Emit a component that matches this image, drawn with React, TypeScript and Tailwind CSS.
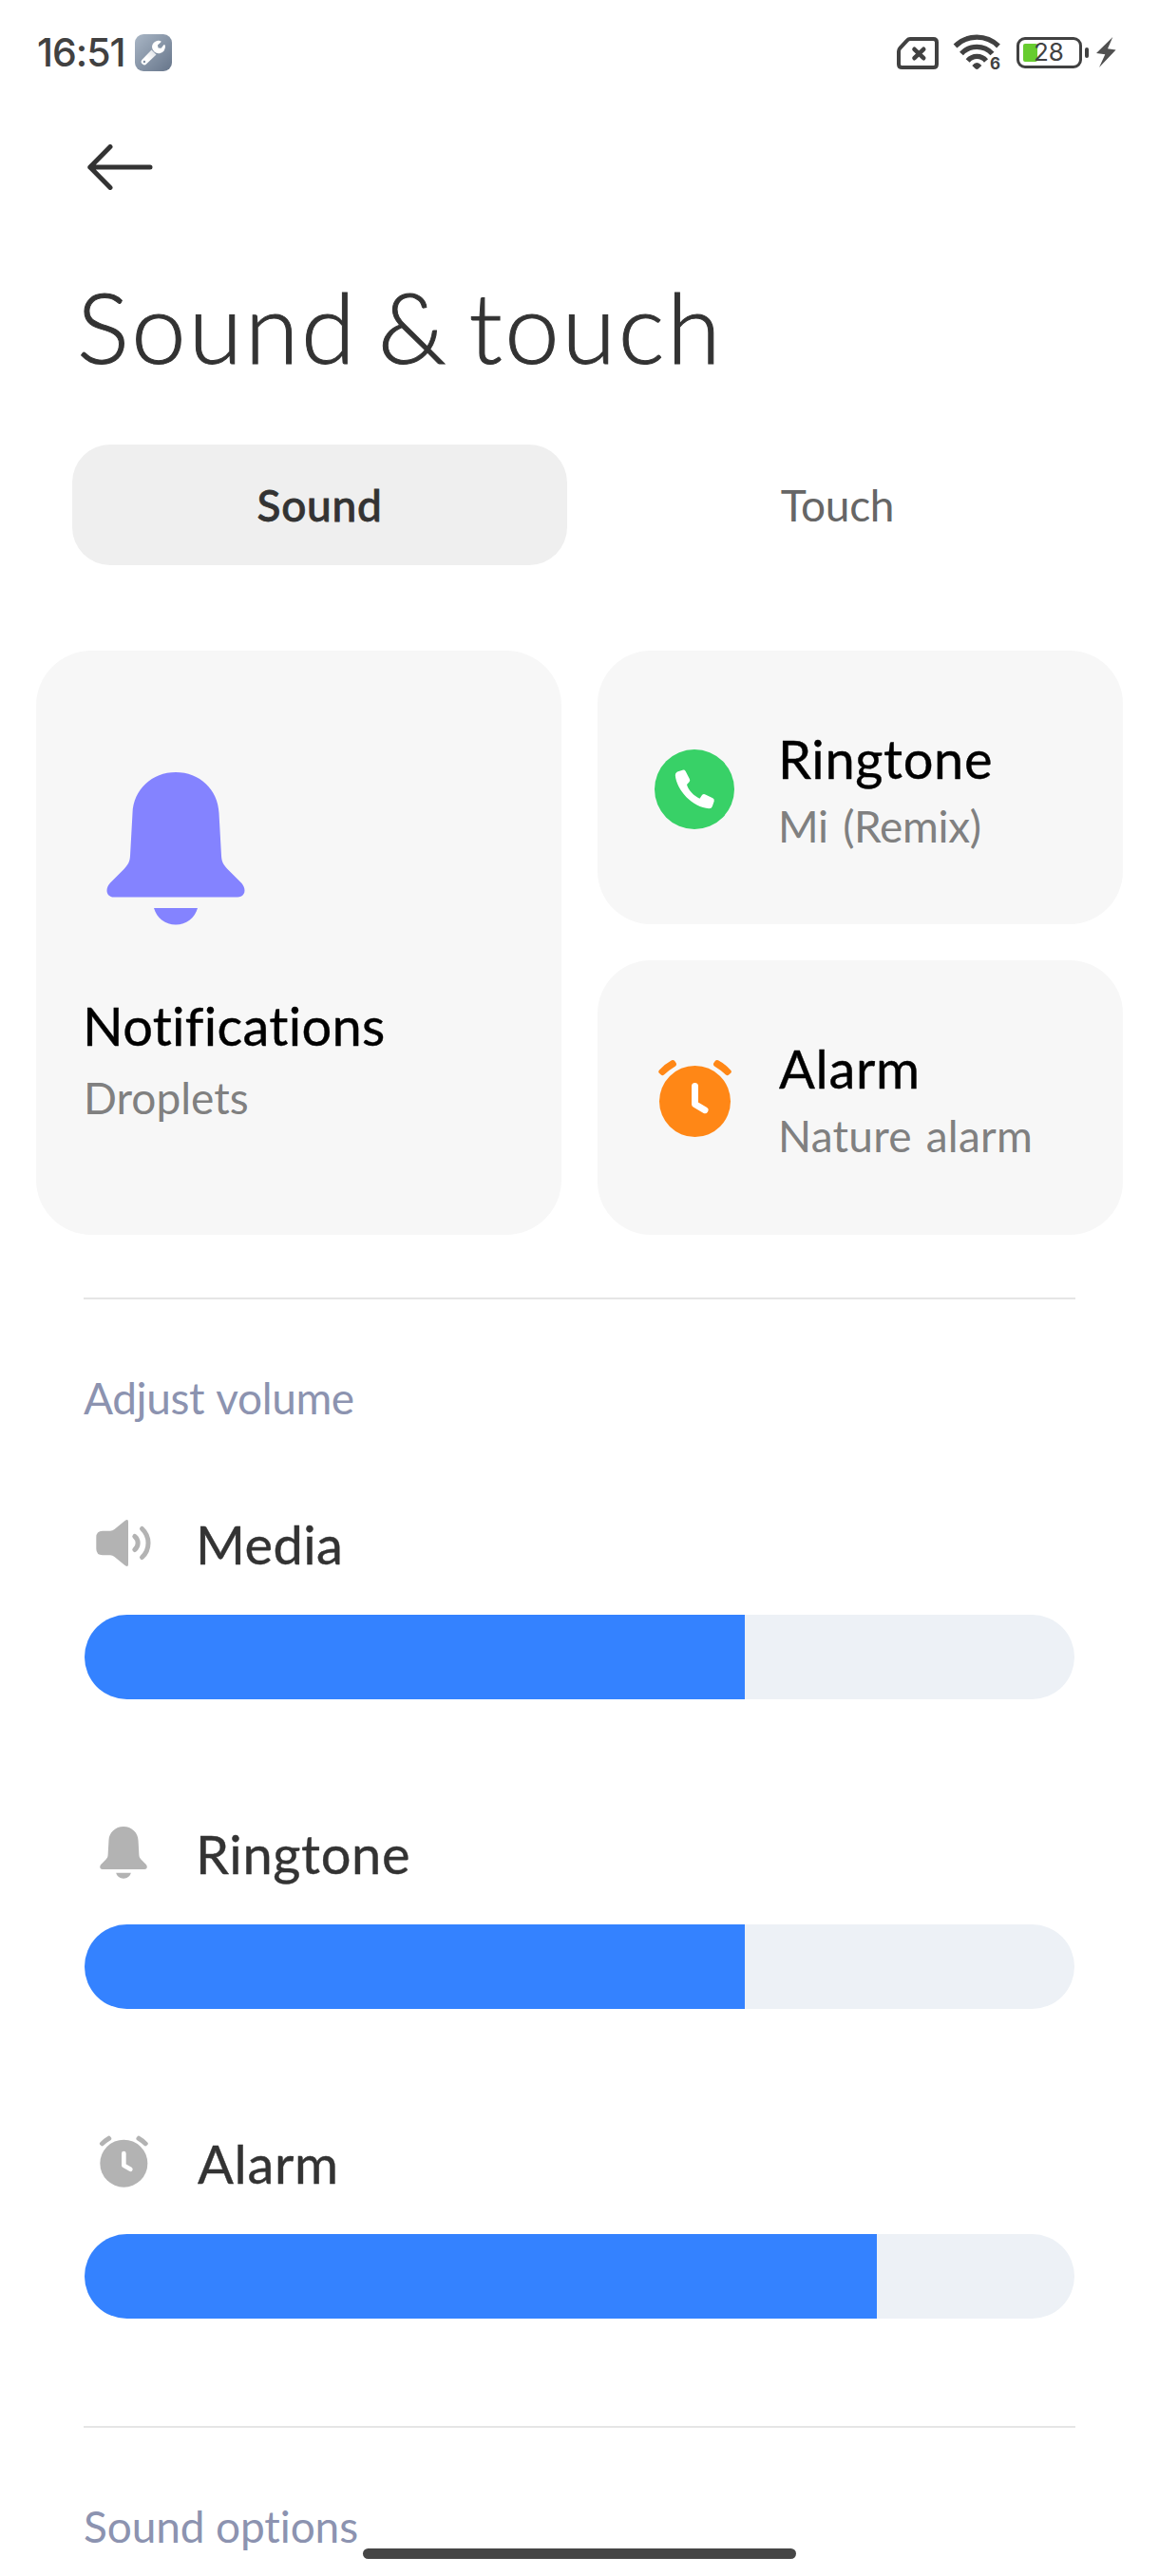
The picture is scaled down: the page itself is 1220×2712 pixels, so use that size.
import type { ReactNode } from 'react'

function StatusBar() {
  return (
    <div className="flex h-[110px] items-center justify-between pl-[39px] pr-[45px] text-[#414141]">
      <div className="flex items-center">
        <span className="w-[103px] font-['Inter',sans-serif] text-[41px] leading-[50px] font-medium tracking-[-1px] whitespace-nowrap">16:51</span>
        <svg width="39" height="39" viewBox="0 0 39 39">
          <defs>
            <linearGradient id="tool-bg" x1="0" y1="0" x2="1" y2="1">
              <stop offset="0" stopColor="#a9b6c5" />
              <stop offset="1" stopColor="#66758a" />
            </linearGradient>
            <linearGradient id="tool-handle" x1="1" y1="0" x2="0" y2="1">
              <stop offset="0" stopColor="#d9dde2" />
              <stop offset="0.6" stopColor="#ffffff" />
            </linearGradient>
          </defs>
          <rect width="39" height="39" rx="9" fill="url(#tool-bg)" />
          <path d="M17.5 16.5L7.6 26.8a3.1 3.1 0 0 0 4.6 4.4L22.5 21.5Z" fill="url(#tool-handle)" />
          <path d="M27.5 7.2A7 7 0 0 0 18 13.5A7 7 0 1 0 31.8 11.6L30.6 10.9L27.6 14.8L24.6 14.6L23.9 11.6L27.3 8.6Z" fill="#fff" />
          <circle cx="9.9" cy="29" r="1.2" fill="#8291a3" />
        </svg>
      </div>
      <div className="flex items-center">
        <svg className="mt-[2px]" width="44" height="34" viewBox="0 0 44 34" fill="none" stroke="currentColor" strokeLinecap="round" strokeLinejoin="round">
          <path d="M14 2H38.5Q42 2 42 5.500V28.500Q42 32 38.500 32H5.500Q2 32 2 28.500V15Q2 13 3.400 11.600L10.800 3.600Q12.200 2 14 2Z" strokeWidth="4" />
          <path d="M18.500 12.800L28.200 22.200M28.200 12.800L18.500 22.200" strokeWidth="4.600" />
        </svg>
        <div className="relative ml-[15px] h-[38px] w-[51px]">
          <svg width="51" height="38" viewBox="0 0 51 38" fill="none" stroke="currentColor" strokeWidth="5.300">
            <path d="M2.500 12.500A32.400 32.400 0 0 1 48 12.500" />
            <path d="M9 20.500A22 22 0 0 1 41.500 20.500" />
            <path d="M15.700 28A12.500 12.500 0 0 1 35 28" />
            <path d="M20.300 33Q25.300 27 30.300 33L27 36.200Q25.300 37.600 23.600 36.200Z" fill="currentColor" stroke="none" />
          </svg>
          <span className="absolute top-[22px] left-[38px] pl-px font-['Inter',sans-serif] text-[17px] leading-[18px] font-bold">6</span>
        </div>
        <div className="relative ml-[16px] flex h-[33px] w-[69px] items-center rounded-[9px] border-[3.500px] border-[#414141] pl-[4px]">
          <div className="h-[19px] w-[15px] rounded-[2px] bg-[#67cc2f]" />
          <span className="absolute left-[15px] font-['Inter',sans-serif] text-[26px] leading-[26px]">28</span>
        </div>
        <div className="ml-[3px] h-[11px] w-[4px] rounded-[2px] bg-[#414141]" />
        <svg className="ml-[8px]" width="21" height="32" viewBox="0 0 21 32" fill="#505050">
          <path d="M17.300 0L0 17L9.300 18.200L3 32L20.600 13.400L12 12.300Z" />
        </svg>
      </div>
    </div>
  )
}

function BellIcon({ className }: { className: string }) {
  return (
    <svg className={className} viewBox="0 0 146 161" fill="currentColor">
      <path d="M73 0C48 0 28.500 18 27.500 43L25 88C24.700 94 23 97 18.500 102L4 116.500C-2 123 0 131.500 8 131.500H138C146 131.500 148 123 142 116.500L127.500 102C123 97 121.300 94 121 88L118.500 43C117.500 18 98 0 73 0Z" />
      <path d="M50 143H96C93 153.500 84 160.500 73 160.500C62 160.500 53 153.500 50 143Z" />
    </svg>
  )
}

function AlarmIcon({ className }: { className: string }) {
  return (
    <svg className={className} viewBox="0 0 84 84" fill="none" strokeLinecap="round" strokeLinejoin="round">
      <circle cx="42.500" cy="44.500" r="37.500" fill="currentColor" />
      <path d="M4.800 11.800Q10.500 5.200 18 1.200Q19.800 0.400 21 1.800L22.800 4.200Q23.700 6.200 22 7.400Q15.500 11.200 10 16.600Q8.300 18 6.800 16.600L4.600 14.600Q3.500 13.200 4.800 11.800Z" fill="currentColor" />
      <path d="M80.200 11.800Q74.500 5.200 67 1.200Q65.200 0.400 64 1.800L62.200 4.200Q61.300 6.200 63 7.400Q69.500 11.200 75 16.600Q76.700 18 78.200 16.600L80.400 14.600Q81.500 13.200 80.200 11.800Z" fill="currentColor" />
      <path d="M42.500 28.500V47.500L53 53.700" stroke="#fff" strokeWidth="7" />
    </svg>
  )
}

function PhoneIcon() {
  return (
    <svg className="size-[84px]" viewBox="0 0 84 84">
      <circle cx="42" cy="42" r="42" fill="#38d167" />
      <path d="M24 23.500L29.500 21.700Q31.600 21.200 32.700 23L36.800 31Q37.800 33 36.500 34.300L34 37C35.500 43 41.500 49 47.500 51.700L50 48Q51.500 46.500 53.500 47.400L61.300 51.300Q63.200 52.400 62.700 54.500L60.800 60Q60 62.200 57.500 62.300C40 61 23 43 21.800 27Q21.800 24.500 24 23.500Z" fill="#fff" />
    </svg>
  )
}

function SpeakerIcon() {
  return (
    <svg className="size-[60px]" viewBox="0 0 60 60" fill="currentColor">
      <path d="M8 17.700H16Q18.500 17.700 20.500 16L31.500 7Q35 4.500 35 8V53Q35 56.500 31.500 54L20.500 45Q18.500 43.300 16 43.300H8Q1.300 43.300 1.300 36.500V24.500Q1.300 17.700 8 17.700Z" />
      <g fill="none" stroke="currentColor" strokeWidth="5" strokeLinecap="round">
        <path d="M41.800 23.500A9 9 0 0 1 41.800 37.500" />
        <path d="M49.500 15.500A20.500 20.500 0 0 1 49.500 45.500" />
      </g>
    </svg>
  )
}

function SoundCard({ icon, title, subtitle, className, titleClass, subClass }: { icon: ReactNode; title: string; subtitle: string; className: string; titleClass: string; subClass: string }) {
  return (
    <div className={`flex rounded-[56px] bg-[#f7f7f7] pl-[60px] ${className}`}>
      <div className="mt-[104px] mr-[46px] h-[84px] w-[84px]">{icon}</div>
      <div className="mt-[82px] whitespace-nowrap">
        <div className={`text-[56px] leading-[64px] text-black [-webkit-text-stroke:0.4px] ${titleClass}`}>{title}</div>
        <div className={`mt-[11px] text-[46px] leading-[56px] text-[#808080] ${subClass}`}>{subtitle}</div>
      </div>
    </div>
  )
}

function VolumeRow({ icon, label, labelClass, fillClass }: { icon: ReactNode; label: string; labelClass: string; fillClass: string }) {
  return (
    <div className="mr-[89px] ml-[89px]">
      <div className="flex h-[64px] items-center pl-[11px]">
        <div className="mr-[46px] flex size-[60px] items-center justify-center text-[#b3b3b3]">{icon}</div>
        <span className={`pt-[4px] text-[56px] leading-[64px] text-[#333333] [-webkit-text-stroke:0.4px] ${labelClass}`}>{label}</span>
      </div>
      <div className="mt-[44px] h-[89px] overflow-hidden rounded-full bg-[#edf1f6]">
        <div className={`h-full bg-[#3482ff] ${fillClass}`} />
      </div>
    </div>
  )
}

export default function App() {
  return (
    <div className="relative h-[2712px] w-[1220px] overflow-hidden bg-white font-['Lato','Noto_Sans',sans-serif] [font-variant-ligatures:none]">
      <StatusBar />

      <svg className="mt-[42px] ml-[92px] block" width="69" height="48" viewBox="0 0 69 48" fill="none" stroke="#333333" strokeWidth="5" strokeLinecap="round" strokeLinejoin="round">
        <path d="M24 2.500L2.800 24L24 45.500M2.800 24H66" />
      </svg>

      <h1 className="mt-[83px] ml-[81px] text-[103px] leading-[120px] font-light tracking-[2.700px] whitespace-nowrap text-[#333333] [-webkit-text-stroke:1px] [word-spacing:-9.500px]">Sound &amp; touch</h1>

      <div className="mt-[65px] grid grid-cols-2 gap-[24px] pr-[78px] pl-[76px] text-[46px]">
        <div className="flex h-[127px] items-center justify-center rounded-[40px] bg-[#efefef] font-medium tracking-[0.700px] text-[#333333] [-webkit-text-stroke:0.8px]">Sound</div>
        <div className="flex h-[127px] items-center justify-center tracking-[-0.300px] text-[#666666]">Touch</div>
      </div>

      <div className="mt-[90px] grid grid-cols-2 gap-[38px] px-[38px]">
        <div className="h-[615px] rounded-[58px] bg-[#f7f7f7]">
          <BellIcon className="mt-[128px] ml-[74px] block h-[161px] w-[146px] text-[#8483ff]" />
          <div className="mt-[74px] ml-[49px] text-[56px] leading-[64px] tracking-[0.300px] text-black [-webkit-text-stroke:0.4px]">Notifications</div>
          <div className="mt-[16px] ml-[50px] text-[46px] leading-[56px] text-[#808080]">Droplets</div>
        </div>
        <div className="flex flex-col gap-[38px]">
          <SoundCard icon={<PhoneIcon />} title="Ringtone" subtitle="Mi (Remix)" className="h-[288px]" titleClass="tracking-[0.650px]" subClass="tracking-[-0.350px] [word-spacing:4px]" />
          <SoundCard icon={<AlarmIcon className="size-[84px] overflow-visible text-[#ff8716]" />} title="Alarm" subtitle="Nature alarm" className="h-[289px]" titleClass="ml-px tracking-[0.690px]" subClass="tracking-[0.250px] [word-spacing:3px]" />
        </div>
      </div>

      <div className="mx-[88px] mt-[66px] h-[2px] bg-[#e5e5e5]" />
      <div className="mt-[76px] ml-[88px] text-[46px] leading-[56px] tracking-[-0.400px] text-[#8c93b0] [word-spacing:2px]">Adjust volume</div>

      <div className="mt-[92px] flex flex-col gap-[129px]">
        <VolumeRow icon={<SpeakerIcon />} label="Media" labelClass="tracking-[0.380px]" fillClass="w-2/3" />
        <VolumeRow icon={<BellIcon className="h-[55px] w-[50px]" />} label="Ringtone" labelClass="tracking-[0.650px]" fillClass="w-2/3" />
        <VolumeRow icon={<AlarmIcon className="size-[56px]" />} label="Alarm" labelClass="ml-[2px] tracking-[0.690px]" fillClass="w-4/5" />
      </div>

      <div className="mx-[88px] mt-[113px] h-[2px] bg-[#e5e5e5]" />
      <div className="mt-[76px] ml-[88px] text-[46px] leading-[56px] tracking-[-0.120px] text-[#8c93b0]">Sound options</div>

      <div className="absolute bottom-[18px] left-[382px] h-[11px] w-[456px] rounded-full bg-[#464646]" />
    </div>
  )
}
